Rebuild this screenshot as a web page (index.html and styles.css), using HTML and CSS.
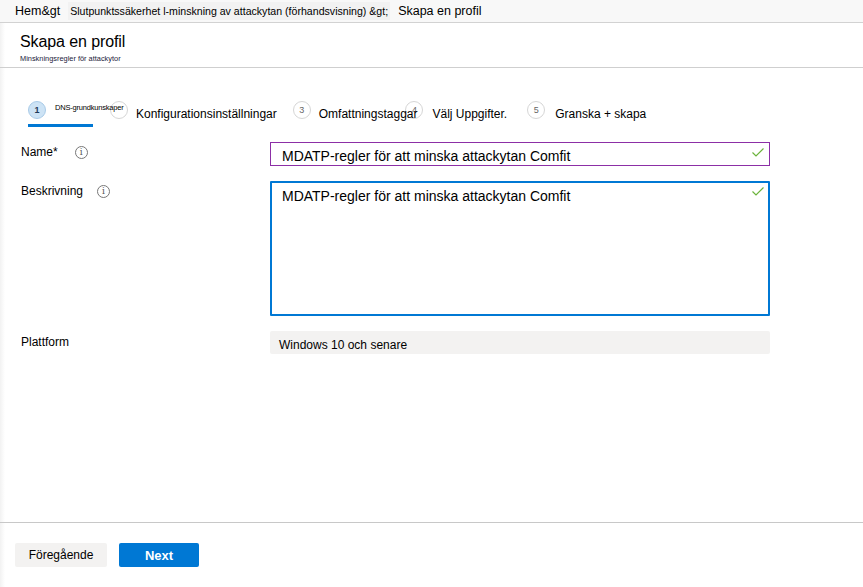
FILE: index.html
```html
<!DOCTYPE html>
<html lang="sv">
<head>
<meta charset="utf-8">
<title>Skapa en profil</title>
<link rel="stylesheet" href="styles.css">
</head>
<body>
<div class="page">
  <nav class="crumbs">
    <span class="crumb home">Hem&amp;gt</span>
    <span class="crumb mid">Slutpunktssäkerhet l-minskning av attackytan (förhandsvisning) &amp;gt;</span>
    <span class="crumb last">Skapa en profil</span>
  </nav>
  <header class="head">
    <h1>Skapa en profil</h1>
    <div class="sub">Minskningsregler för attackytor</div>
  </header>
  <div class="steps">
    <div class="step active">
      <span class="num">1</span>
      <span class="tiny">DNS-grundkunskaper</span>
      <span class="num ghost">2</span>
      <span class="lbl">Konfigurationsinställningar</span>
    </div>
    <div class="step s3">
      <span class="num">3</span>
      <span class="lbl">Omfattningstaggar</span>
    </div>
    <div class="step s4">
      <span class="num">4</span>
      <span class="lbl">Välj Uppgifter.</span>
    </div>
    <div class="step s5">
      <span class="num">5</span>
      <span class="lbl">Granska + skapa</span>
    </div>
  </div>
  <main class="form">
    <div class="row r-name">
      <div class="label">Name* <span class="info">i</span></div>
      <div class="field input purple">MDATP-regler för att minska attackytan Comfit<svg class="check" viewBox="0 0 12 9"><path d="M0.5 4.5 L4 8 L11.5 0.5" fill="none" stroke="#6bb33b" stroke-width="1.2"/></svg></div>
    </div>
    <div class="row r-desc">
      <div class="label">Beskrivning <span class="info">i</span></div>
      <div class="field textarea">MDATP-regler för att minska attackytan Comfit<svg class="check" viewBox="0 0 12 9"><path d="M0.5 4.5 L4 8 L11.5 0.5" fill="none" stroke="#6bb33b" stroke-width="1.2"/></svg></div>
    </div>
    <div class="row r-plat">
      <div class="label">Plattform</div>
      <div class="field readonly">Windows 10 och senare</div>
    </div>
  </main>
  <footer class="foot">
    <button class="btn prev">Föregående</button>
    <button class="btn next">Next</button>
  </footer>
</div>
</body>
</html>
```
FILE: styles.css
```css
* { box-sizing: border-box; }
html, body { margin: 0; padding: 0; background: #fff; }
body {
  font-family: "Liberation Sans", Arial, sans-serif;
  color: #000;
  width: 863px;
  height: 587px;
  overflow: hidden;
}
.page {
  height: 587px;
  display: flex;
  flex-direction: column;
  background: linear-gradient(to right, #f2f2f2 0, #fff 5px);
}
.crumbs {
  height: 23px;
  display: flex;
  align-items: center;
  background: #f8f8f8;
  border-bottom: 1px solid #d2d2d2;
  padding-left: 15px;
}
.crumb { font-size: 12.5px; line-height: 16px; }
.crumb.home { margin-right: 8px; }
.crumb.mid {
  font-size: 10.6px;
  background: #f2f2f2;
  padding: 1px 2px;
  margin-right: 8px;
}
.head {
  height: 45px;
  border-bottom: 1px solid #cfcfcf;
  padding: 10px 0 0 20px;
}
.head h1 {
  margin: 0;
  font-size: 16px;
  font-weight: normal;
  line-height: 18px;
  letter-spacing: -0.1px;
}
.sub {
  font-size: 7.4px;
  line-height: 10px;
  margin-top: 3px;
  color: #1a1a3a;
}
.steps {
  height: 60px;
  position: relative;
  display: flex;
  align-items: flex-start;
  padding-top: 33px;
  padding-left: 28px;
}
.step { display: flex; align-items: flex-start; height: 18px; }
.num {
  width: 18px;
  height: 18px;
  border-radius: 50%;
  border: 1px solid #d6d6d6;
  font-size: 9px;
  color: #666;
  display: inline-flex;
  align-items: center;
  justify-content: center;
  background: #fff;
  flex: none;
}
.step.active .num:first-child {
  background: #cde3f5;
  border-color: #a9cbe8;
  color: #1f3a5a;
  font-weight: bold;
}
.step.active::after {
  content: "";
  position: absolute;
  left: 28px;
  top: 56px;
  width: 65px;
  height: 3px;
  background: #0078d4;
}
.tiny {
  font-size: 7.5px;
  margin-left: 9px;
  margin-top: 2px;
  letter-spacing: -0.2px;
  position: relative;
  z-index: 1;
  width: 55px;
  white-space: nowrap;
}
.num.ghost { color: transparent; }
.lbl {
  font-size: 12px;
  line-height: 14px;
  margin-left: 8px;
  margin-top: 6px;
  position: relative;
  z-index: 1;
  white-space: nowrap;
}
.s3 { margin-left: 16px; }
.s4 { margin-left: -12px; }
.s4 .lbl { margin-left: 9px; }
.s5 { margin-left: 20px; }
.s5 .lbl { margin-left: 10px; }
.form { flex: 1; padding-left: 21px; }
.row { display: flex; align-items: flex-start; }
.label {
  width: 249px;
  font-size: 12px;
  display: flex;
  align-items: center;
}
.info {
  width: 13px;
  height: 13px;
  border: 1px solid #777;
  border-radius: 50%;
  font-size: 9px;
  color: #555;
  display: inline-flex;
  align-items: center;
  justify-content: center;
  font-family: "DejaVu Serif", serif;
}
.r-name .info { margin-left: 17px; }
.r-desc .info { margin-left: 14px; }
.field {
  width: 500px;
  position: relative;
  font-size: 14px;
}
.check { position: absolute; right: 5px; width: 12px; height: 9px; }
.r-name { margin-top: 14px; }
.r-name .label { margin-top: 3px; }
.input {
  height: 24px;
  border: 1px solid #8c2fa6;
  padding: 4px 0 0 11px;
  line-height: 18px;
}
.input .check { top: 5px; }
.r-desc { margin-top: 15px; }
.r-desc .label { margin-top: 3px; }
.textarea {
  height: 135px;
  border: 2px solid #0078d4;
  border-radius: 1px;
  padding: 4px 0 0 10px;
  line-height: 18px;
}
.textarea .check { top: 4px; right: 4px; }
.r-plat { margin-top: 15px; }
.r-plat .label { margin-top: 4px; }
.readonly {
  height: 23px;
  background: #f3f2f1;
  border-radius: 2px;
  font-size: 12px;
  padding: 7px 0 0 9px;
  line-height: 14px;
}
.foot {
  height: 65px;
  border-top: 1px solid #c8c8c8;
  display: flex;
  align-items: flex-start;
  padding: 20px 0 0 15px;
  gap: 12px;
}
.btn {
  height: 24px;
  border: none;
  border-radius: 2px;
  font-family: "Liberation Sans", Arial, sans-serif;
  font-size: 12px;
  padding: 0;
}
.prev { width: 92px; background: #f3f2f1; color: #000; }
.next { width: 80px; background: #0078d4; color: #fff; font-weight: bold; font-size: 13px; }
```
